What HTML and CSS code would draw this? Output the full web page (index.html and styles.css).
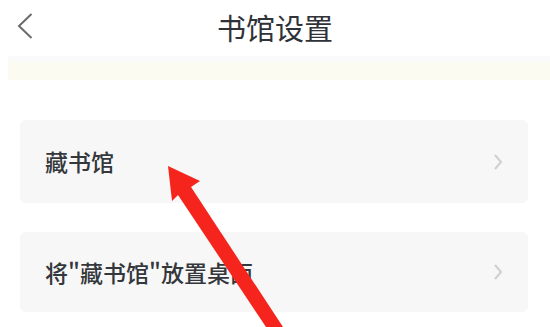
FILE: index.html
```html
<!DOCTYPE html>
<html lang="zh-CN">
<head>
<meta charset="utf-8">
<title>书馆设置</title>
<link rel="stylesheet" href="styles.css">
</head>
<body>
<div class="page">
  <header class="topbar">
    <div class="back">
      <svg width="16" height="26" viewBox="0 0 16 26"><polyline points="14.5,1 2,13 14.5,25" fill="none" stroke="#6b6b6b" stroke-width="2" stroke-linejoin="miter"/></svg>
    </div>
    <h1 class="title">书馆设置</h1>
    <div class="spacer"></div>
  </header>
  <div class="band"></div>
  <div class="list">
    <div class="item item-first">
      <span class="label">藏书馆</span>
      <svg class="chev" width="10" height="18" viewBox="0 0 10 18"><polyline points="2,2 8,9 2,16" fill="none" stroke="#cfcfcf" stroke-width="2"/></svg>
    </div>
    <div class="item">
      <span class="label">将"藏书馆"放置桌面</span>
      <svg class="chev" width="10" height="18" viewBox="0 0 10 18"><polyline points="2,2 8,9 2,16" fill="none" stroke="#cfcfcf" stroke-width="2"/></svg>
    </div>
  </div>
  <svg class="arrow" width="550" height="327" viewBox="0 0 550 327">
    <polygon points="168,166 200,181 191,187 283,327 266,327 178,195 172,201" fill="#f5241c"/>
  </svg>
</div>
</body>
</html>
```

FILE: styles.css
```css
html, body {
  margin: 0;
  padding: 0;
  background: #ffffff;
}
.page {
  position: relative;
  width: 550px;
  height: 327px;
  overflow: hidden;
  font-family: "Noto Sans CJK SC", "Noto Sans", sans-serif;
  color: #33363b;
}
.topbar {
  height: 52px;
  display: grid;
  grid-template-columns: 1fr auto 1fr;
  align-items: center;
}
.back {
  padding-left: 17px;
  display: flex;
  align-items: center;
}
.title {
  margin: 0;
  font-size: 29px;
  font-weight: 400;
  line-height: 1;
  color: #2f3237;
  padding-top: 2px;
}
.band {
  margin: 4px 0 0 8px;
  height: 24px;
  background: linear-gradient(#fafafa 0, #fafafa 6px, #fbfbf1 7px, #fbfbf1 100%);
}
.list {
  display: flex;
  flex-direction: column;
  gap: 29px;
  padding: 40px 22px 0 20px;
}
.item {
  height: 80px;
  background: #f7f7f7;
  border-radius: 6px;
  display: flex;
  align-items: center;
  justify-content: space-between;
  padding: 0 25px 0 25px;
}
.item-first {
  height: 83px;
}
.label {
  font-size: 23px;
  line-height: 1;
  color: #34373c;
  font-weight: 500;
}
.chev {
  display: block;
}
.arrow {
  position: absolute;
  left: 0;
  top: 0;
  pointer-events: none;
}
```
